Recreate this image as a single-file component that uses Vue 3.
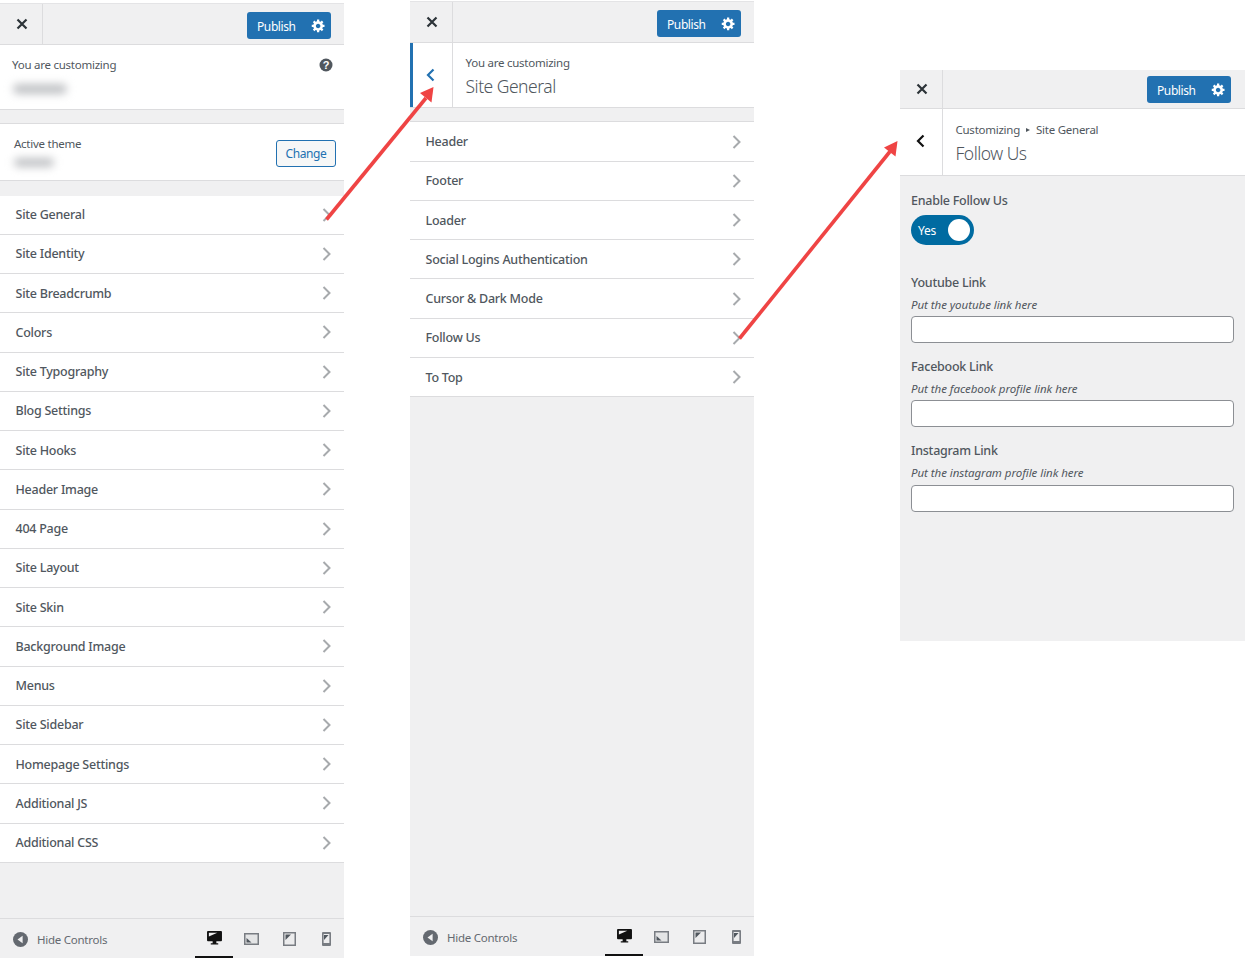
<script setup>
const mainRows = ['Site General','Site Identity','Site Breadcrumb','Colors','Site Typography','Blog Settings','Site Hooks','Header Image','404 Page','Site Layout','Site Skin','Background Image','Menus','Site Sidebar','Homepage Settings','Additional JS','Additional CSS']
const subRows = ['Header','Footer','Loader','Social Logins Authentication','Cursor & Dark Mode','Follow Us','To Top']
const fields = [
  { label: 'Youtube Link', hint: 'Put the youtube link here' },
  { label: 'Facebook Link', hint: 'Put the facebook profile link here' },
  { label: 'Instagram Link', hint: 'Put the instagram profile link here' }
]
const gear = 'M18 12h-2.18c-.17.7-.44 1.35-.81 1.93l1.54 1.54-2.1 2.1-1.54-1.54c-.58.36-1.23.63-1.91.79V19H8v-2.18c-.68-.16-1.33-.43-1.91-.79l-1.54 1.54-2.12-2.12 1.54-1.54c-.36-.58-.63-1.23-.79-1.91H1V9.03h2.17c.16-.7.44-1.35.8-1.94L2.43 5.55l2.1-2.1 1.54 1.54c.58-.37 1.24-.64 1.93-.81V2h3v2.18c.68.16 1.33.43 1.91.79l1.54-1.54 2.12 2.12-1.54 1.54c.36.59.64 1.24.8 1.94H18V12zm-8.5 1.5c1.66 0 3-1.34 3-3s-1.34-3-3-3-3 1.34-3 3 1.34 3 3 3z'
</script>

<template>
  <div class="page">
    <!-- Panel 1 -->
    <section class="panel panel-a">
      <header class="topbar">
        <div class="close"><svg width="12" height="12" viewBox="0 0 12 12"><path d="M1.500 1.500l9 9M10.500 1.500l-9 9" /></svg></div>
        <button class="publish"><span>Publish</span><svg width="15" height="15" viewBox="0 0 20 20"><path :d="gear" /></svg></button>
      </header>
      <div class="info info-a">
        <div class="info-top">
          <span class="small">You are customizing</span>
          <svg class="help" width="14" height="14" viewBox="0 0 14 14"><circle cx="7" cy="7" r="6.500" /><text x="7" y="10.600" text-anchor="middle">?</text></svg>
        </div>
        <div class="blur blur-site"></div>
      </div>
      <div class="theme">
        <div>
          <div class="small">Active theme</div>
          <div class="blur blur-theme"></div>
        </div>
        <button class="change">Change</button>
      </div>
      <ul class="rows rows-a">
        <li v-for="r in mainRows" :key="r" class="row">
          <span>{{ r }}</span>
          <svg class="chev" width="9" height="14" viewBox="0 0 9 14"><path d="M1.500 1L7.500 7L1.500 13" /></svg>
        </li>
      </ul>
      <footer class="foot">
        <div class="hide">
          <svg width="15" height="15" viewBox="0 0 15 15"><circle cx="7.500" cy="7.500" r="7.500" fill="#646970" /><path d="M9.600 3.800v7.400L4.500 7.500z" fill="#f0f0f1" /></svg>
          <span>Hide Controls</span>
        </div>
        <div class="devices">
          <div class="dev dev-on"><svg width="15" height="14" viewBox="0 0 16 15"><path d="M1 0h14a1 1 0 0 1 1 1v9a1 1 0 0 1-1 1H10v2h2v1.500H4V13h2v-2H1a1 1 0 0 1-1-1V1a1 1 0 0 1 1-1z" fill="#111" /><path d="M2 2h9L2 6z" fill="#f0f0f1" /></svg></div>
          <div class="dev d2"><svg width="15" height="12" viewBox="0 0 15 12"><rect x=".75" y=".75" width="13.500" height="10.500" fill="#e4e5e6" stroke="#787c82" stroke-width="1.500" /><path d="M2.500 9.500V5l5 4.500z" fill="#50575e" /></svg></div>
          <div class="dev d3"><svg width="13" height="14" viewBox="0 0 13 14"><rect x=".75" y=".75" width="11.500" height="12.500" fill="#ececed" stroke="#787c82" stroke-width="1.500" /><path d="M2.500 2.500H8L2.500 8z" fill="#50575e" /></svg></div>
          <div class="dev d4"><svg width="9" height="14" viewBox="0 0 9 14"><rect width="9" height="14" rx="1" fill="#787c82" /><rect x="1.600" y="2" width="5.800" height="9" fill="#ececed" /><path d="M2 3h4.500L2 8z" fill="#50575e" /></svg></div>
        </div>
      </footer>
    </section>

    <!-- Panel 2 -->
    <section class="panel panel-b">
      <header class="topbar">
        <div class="close"><svg width="12" height="12" viewBox="0 0 12 12"><path d="M1.500 1.500l9 9M10.500 1.500l-9 9" /></svg></div>
        <button class="publish"><span>Publish</span><svg width="15" height="15" viewBox="0 0 20 20"><path :d="gear" /></svg></button>
      </header>
      <div class="sub sub-b">
        <div class="back back-on"><svg width="9" height="14" viewBox="0 0 9 14"><path d="M7.500 1.500L2 7l5.500 5.500" /></svg></div>
        <div class="sub-text">
          <div class="small">You are customizing</div>
          <div class="title">Site General</div>
        </div>
      </div>
      <ul class="rows rows-b">
        <li v-for="r in subRows" :key="r" class="row">
          <span>{{ r }}</span>
          <svg class="chev" width="9" height="14" viewBox="0 0 9 14"><path d="M1.500 1L7.500 7L1.500 13" /></svg>
        </li>
      </ul>
      <footer class="foot">
        <div class="hide">
          <svg width="15" height="15" viewBox="0 0 15 15"><circle cx="7.500" cy="7.500" r="7.500" fill="#646970" /><path d="M9.600 3.800v7.400L4.500 7.500z" fill="#f0f0f1" /></svg>
          <span>Hide Controls</span>
        </div>
        <div class="devices">
          <div class="dev dev-on"><svg width="15" height="14" viewBox="0 0 16 15"><path d="M1 0h14a1 1 0 0 1 1 1v9a1 1 0 0 1-1 1H10v2h2v1.500H4V13h2v-2H1a1 1 0 0 1-1-1V1a1 1 0 0 1 1-1z" fill="#111" /><path d="M2 2h9L2 6z" fill="#f0f0f1" /></svg></div>
          <div class="dev d2"><svg width="15" height="12" viewBox="0 0 15 12"><rect x=".75" y=".75" width="13.500" height="10.500" fill="#e4e5e6" stroke="#787c82" stroke-width="1.500" /><path d="M2.500 9.500V5l5 4.500z" fill="#50575e" /></svg></div>
          <div class="dev d3"><svg width="13" height="14" viewBox="0 0 13 14"><rect x=".75" y=".75" width="11.500" height="12.500" fill="#ececed" stroke="#787c82" stroke-width="1.500" /><path d="M2.500 2.500H8L2.500 8z" fill="#50575e" /></svg></div>
          <div class="dev d4"><svg width="9" height="14" viewBox="0 0 9 14"><rect width="9" height="14" rx="1" fill="#787c82" /><rect x="1.600" y="2" width="5.800" height="9" fill="#ececed" /><path d="M2 3h4.500L2 8z" fill="#50575e" /></svg></div>
        </div>
      </footer>
    </section>

    <!-- Panel 3 -->
    <section class="panel panel-c">
      <header class="topbar topbar-c">
        <div class="close"><svg width="12" height="12" viewBox="0 0 12 12"><path d="M1.500 1.500l9 9M10.500 1.500l-9 9" /></svg></div>
        <button class="publish"><span>Publish</span><svg width="15" height="15" viewBox="0 0 20 20"><path :d="gear" /></svg></button>
      </header>
      <div class="sub sub-c">
        <div class="back"><svg width="9" height="14" viewBox="0 0 9 14"><path d="M7.500 1.500L2 7l5.500 5.500" /></svg></div>
        <div class="sub-text">
          <div class="small crumb">Customizing<i class="tri"></i>Site General</div>
          <div class="title">Follow Us</div>
        </div>
      </div>
      <div class="form">
        <div class="label">Enable Follow Us</div>
        <div class="toggle"><span>Yes</span><b></b></div>
        <div class="fields">
          <div v-for="f in fields" :key="f.label" class="field">
            <div class="label">{{ f.label }}</div>
            <div class="hint">{{ f.hint }}</div>
            <div class="input"></div>
          </div>
        </div>
      </div>
    </section>

    <svg class="arrows" width="1245" height="958" viewBox="0 0 1245 958">
      <path d="M326.500 219.500L426 98" />
      <polygon points="433.500,87 431.500,102.500 420,93" />
      <path d="M739.500 338.500L890 151.500" />
      <polygon points="897.500,141 895.500,156.500 884,147.500" />
    </svg>
  </div>
</template>

<style>
html, body { margin: 0; background: #fff; }
</style>

<style scoped>
.page {
  position: relative;
  display: flex;
  align-items: flex-start;
  width: 1245px;
  height: 958px;
  overflow: hidden;
  font-family: "Noto Sans", "Open Sans", sans-serif;
  font-size: 12.500px;
  letter-spacing: -0.25px;
  color: #50575e;
}
.panel { display: flex; flex-direction: column; background: #f0f0f1; box-sizing: border-box; }
.panel-a { width: 344px; height: 955px; margin-top: 3px; }
.panel-b { width: 344px; height: 955px; margin-top: 1px; margin-left: 66px; }
.panel-c { width: 345px; height: 571px; margin-top: 70px; margin-left: 146px; }

.topbar {
  display: flex;
  align-items: center;
  justify-content: space-between;
  height: 42px;
  flex: none;
  box-sizing: border-box;
  border-top: 1px solid #e4e4e6;
  border-bottom: 1px solid #dcdcde;
  padding-right: 13px;
}
.topbar-c { height: 39px; border-top: 0; padding-right: 14px; }
.close {
  width: 43px;
  height: 100%;
  display: flex;
  align-items: center;
  justify-content: center;
  box-sizing: border-box;
  padding-left: 1px;
  border-right: 1px solid #dcdcde;
}
.close svg path { fill: none; stroke: #2c3338; stroke-width: 2.200; }
.publish {
  display: flex;
  align-items: center;
  justify-content: space-between;
  width: 84px;
  height: 27px;
  margin-top: 2px;
  box-sizing: border-box;
  padding: 1px 5px 0 10px;
  background: #2271b1;
  border: 0;
  border-radius: 3px;
  color: #fff;
  font-family: inherit;
  font-size: 12px;
  letter-spacing: -0.4px;
}
.topbar-c .publish { margin-top: 0; }
.publish span { position: relative; top: 1px; }
.publish svg { fill: #fff; }

.small { font-size: 11.500px; color: #50575e; line-height: 16px; letter-spacing: -0.25px; }
.info-a { height: 64px; flex: none; background: #fff; border-bottom: 1px solid #dcdcde; box-sizing: content-box; padding: 0 11px 0 12px; }
.info-top { display: flex; justify-content: space-between; align-items: center; padding: 12px 0 0; }
.help circle { fill: #50575e; }
.help text { fill: #fff; font-size: 11px; font-weight: 700; font-family: "Liberation Sans", sans-serif; }
.blur { background: #c0c2c5; filter: blur(4.500px); border-radius: 5px; }
.blur-site { width: 54px; height: 10px; margin: 11px 0 0 1px; }
.blur-theme { width: 40px; height: 9px; margin: 6px 0 0 0; }
.theme {
  display: flex;
  justify-content: space-between;
  align-items: flex-start;
  flex: none;
  height: 58px;
  margin-top: 13px;
  padding: 12px 8px 0 14px;
  background: #fff;
  border-top: 1px solid #dcdcde;
  border-bottom: 1px solid #dcdcde;
  box-sizing: border-box;
}
.change {
  width: 60px;
  height: 27px;
  margin-top: 4px;
  background: #f6f7f7;
  border: 1px solid #2271b1;
  border-radius: 3px;
  color: #2271b1;
  font-family: inherit;
  font-size: 12px;
  letter-spacing: -0.4px;
  padding: 0;
}

.rows { list-style: none; margin: 0; padding: 0; flex: none; background: #fff; }
.rows-a { margin-top: 14.500px; }
.rows-b { margin-top: 13.400px; border-top: 1px solid #dcdcde; }
.row {
  display: flex;
  align-items: center;
  justify-content: space-between;
  height: 39.250px;
  box-sizing: border-box;
  padding: 0 13px 0 15.500px;
  border-bottom: 1px solid #dcdcde;
  font-weight: 500;
}
.chev path { fill: none; stroke: #a7aaad; stroke-width: 2; }

.foot {
  margin-top: auto;
  flex: none;
  height: 40px;
  display: flex;
  align-items: center;
  justify-content: space-between;
  border-top: 1px solid #dcdcde;
  box-sizing: border-box;
}
.hide { display: flex; align-items: center; gap: 9px; padding: 1px 0 0 13px; font-size: 11.500px; color: #646970; }
.devices { display: flex; height: 100%; align-items: center; }
.dev { display: flex; align-items: center; justify-content: center; height: 100%; box-sizing: border-box; padding-top: 1px; }
.dev svg { display: block; }
.dev-on { width: 38px; border-bottom: 2px solid #111; }
.d2 { width: 37px; }
.d3 { width: 38px; }
.d4 { width: 36px; }

.sub { display: flex; background: #fff; flex: none; border-bottom: 1px solid #dcdcde; box-sizing: border-box; }
.sub-b { height: 65px; }
.sub-c { height: 67px; }
.back {
  width: 43px;
  flex: none;
  display: flex;
  align-items: center;
  justify-content: center;
  border-right: 1px solid #dcdcde;
  box-sizing: border-box;
  padding: 0 2px 2px 0;
}
.back path { fill: none; stroke: #111; stroke-width: 2.200; }
.back-on { border-left: 3px solid #2271b1; padding: 0 4px 1px 0; }
.back-on path { stroke: #2271b1; }
.sub-text { padding: 12px 0 0 12.500px; }
.sub-c .sub-text { padding-top: 13px; }
.title { font-size: 17.500px; font-weight: 300; letter-spacing: -0.5px; color: #50575e; line-height: 26px; margin-top: 2px; }
.crumb { display: flex; align-items: center; }
.tri { width: 0; height: 0; margin: 0 6px; border-left: 4px solid #50575e; border-top: 2.500px solid transparent; border-bottom: 2.500px solid transparent; }

.form { padding: 16px 11px 0; }
.label { font-weight: 500; color: #50575e; line-height: 18px; }
.toggle {
  position: relative;
  width: 63px;
  height: 30px;
  margin-top: 5px;
  border-radius: 15px;
  background: #006ba1;
  color: #fff;
  font-size: 12px;
  line-height: 31px;
  padding-left: 7px;
  box-sizing: border-box;
}
.toggle b {
  position: absolute;
  right: 4px;
  top: 4px;
  width: 22px;
  height: 22px;
  border-radius: 50%;
  background: #fff;
}
.fields { display: flex; flex-direction: column; gap: 15px; margin-top: 29px; }
.hint { font-size: 11.500px; font-style: italic; letter-spacing: -0.05px; color: #50575e; line-height: 16px; margin-top: 5px; }
.input {
  height: 27px;
  margin-top: 3px;
  background: #fff;
  border: 1px solid #8c8f94;
  border-radius: 4px;
  box-sizing: border-box;
}
.field:last-child .input { margin-top: 4px; }

.arrows { position: absolute; left: 0; top: 0; pointer-events: none; }
.arrows path { fill: none; stroke: #ef4444; stroke-width: 3.600; }
.arrows polygon { fill: #ef4444; }
</style>
